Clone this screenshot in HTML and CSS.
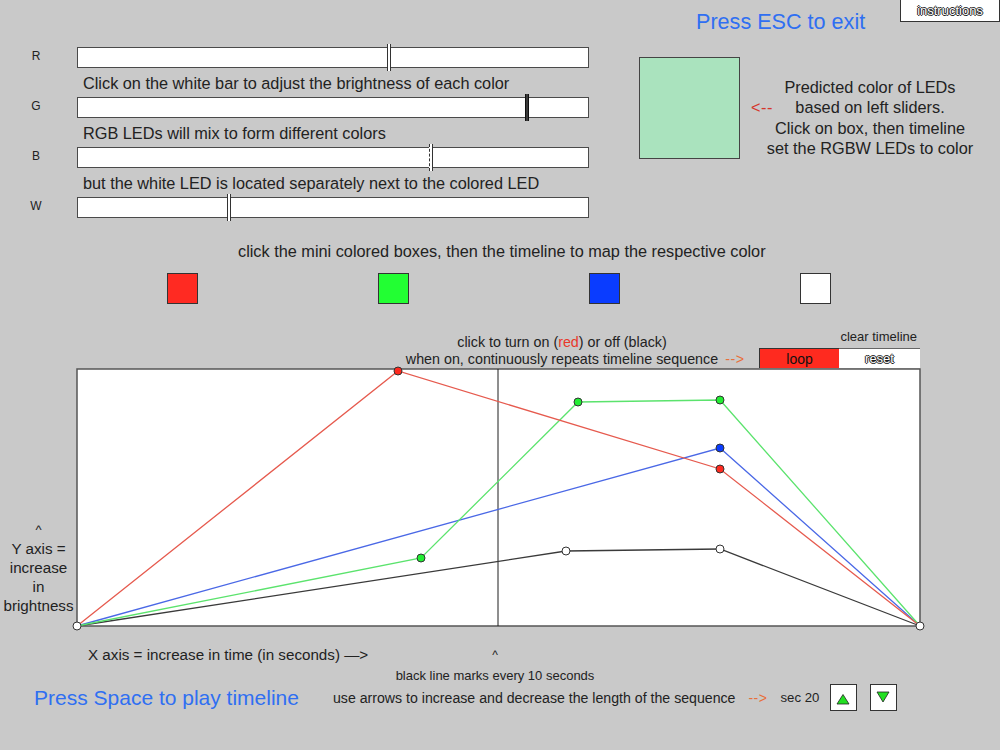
FILE: index.html
```html
<!DOCTYPE html>
<html>
<head>
<meta charset="utf-8">
<title>RGBW LED timeline</title>
<link rel="stylesheet" href="styles.css">
</head>
<body>
<div class="app">
  <header class="header">
    <div class="esc">Press ESC to exit</div>
    <button class="instructions outlined">instructions</button>
  </header>

  <section class="top">
    <div class="sliders">
      <div class="slider-row"><span class="label">R</span><div class="bar"><span class="handle" style="left:309px"></span></div></div>
      <p class="caption">Click on the white bar to adjust the brightness of each color</p>
      <div class="slider-row"><span class="label">G</span><div class="bar"><span class="handle dark" style="left:447px"></span></div></div>
      <p class="caption">RGB LEDs will mix to form different colors</p>
      <div class="slider-row"><span class="label">B</span><div class="bar"><span class="handle dashed" style="left:351px"></span></div></div>
      <p class="caption">but the white LED is located separately next to the colored LED</p>
      <div class="slider-row"><span class="label">W</span><div class="bar"><span class="handle" style="left:149px"></span></div></div>
    </div>
    <div class="preview">
      <div class="led-box"></div>
      <div class="predict">
        <span class="back-arrow">&lt;--</span>
        <span class="line">Predicted color of LEDs</span>
        <span class="line">based on left sliders.</span>
        <span class="line">Click on box, then timeline</span>
        <span class="line">set the RGBW LEDs to color</span>
      </div>
    </div>
  </section>

  <p class="map-hint">click the mini colored boxes, then the timeline to map the respective color</p>

  <div class="swatches">
    <span class="swatch red"></span>
    <span class="swatch green"></span>
    <span class="swatch blue"></span>
    <span class="swatch white"></span>
  </div>

  <div class="timeline-head">
    <div class="loop-help">
      <span class="line">click to turn on (<span class="red-word">red</span>) or off (black)</span>
      <span class="line">when on, continuously repeats timeline sequence<span class="orange-arrow">--&gt;</span></span>
    </div>
    <div class="controls">
      <div class="clear-label">clear timeline</div>
      <div class="btn-pair">
        <button class="loop">loop</button>
        <button class="reset outlined">reset</button>
      </div>
    </div>
  </div>

  <div class="chart-row">
    <div class="y-label">
      <span class="caret">^</span>
      <span>Y axis =</span>
      <span>increase</span>
      <span>in</span>
      <span>brightness</span>
    </div>
    <svg class="chart" width="845" height="259" viewBox="0 0 845 259">
      <rect x="1" y="1" width="843" height="257" fill="#ffffff" stroke="#555555" stroke-width="1.5"/>
      <line x1="422" y1="1" x2="422" y2="258" stroke="#1e1e1e" stroke-width="1"/>
      <polyline points="1,258 490,183 644,181 844,258" fill="none" stroke="#3a3a3a" stroke-width="1.3"/>
      <polyline points="1,258 644,80 844,258" fill="none" stroke="#4a68e6" stroke-width="1.3"/>
      <polyline points="1,258 345,190 502,34 644,32 844,258" fill="none" stroke="#5be36d" stroke-width="1.3"/>
      <polyline points="1,258 322,3 644,101 844,258" fill="none" stroke="#e65a4e" stroke-width="1.3"/>
      <g stroke="#333333" stroke-width="1">
        <circle cx="490" cy="183" r="4" fill="#ffffff"/>
        <circle cx="644" cy="181" r="4" fill="#ffffff"/>
        <circle cx="644" cy="80" r="4" fill="#0a3cff"/>
        <circle cx="345" cy="190" r="4" fill="#22ee33"/>
        <circle cx="502" cy="34" r="4" fill="#22ee33"/>
        <circle cx="644" cy="32" r="4" fill="#22ee33"/>
        <circle cx="322" cy="3" r="4" fill="#ff2a1f"/>
        <circle cx="644" cy="101" r="4" fill="#ff2a1f"/>
        <circle cx="1" cy="258" r="4" fill="#ffffff"/>
        <circle cx="844" cy="258" r="4" fill="#ffffff"/>
      </g>
    </svg>
  </div>

  <div class="x-row">
    <span class="x-label">X axis = increase in time (in seconds) —&gt;</span>
    <span class="x-caret">^</span>
  </div>
  <p class="tick-note">black line marks every 10 seconds</p>

  <div class="bottom-row">
    <span class="space">Press Space to play timeline</span>
    <span class="len-help">use arrows to increase and decrease the length of the sequence</span>
    <span class="orange-arrow2">--&gt;</span>
    <span class="sec">sec 20</span>
    <button class="step up">
      <svg width="27" height="27" viewBox="0 0 27 27"><polygon points="7,20 13,10.5 19,20" fill="#22e022" stroke="#222" stroke-width="0.8"/></svg>
    </button>
    <button class="step down">
      <svg width="27" height="27" viewBox="0 0 27 27"><polygon points="7,8 19,8 13,18" fill="#22e022" stroke="#222" stroke-width="0.8"/></svg>
    </button>
  </div>
</div>
</body>
</html>
```

FILE: styles.css
```css
* {
  box-sizing: border-box;
}

html, body {
  margin: 0;
  padding: 0;
  background: #c9c9c9;
}

body {
  font-family: "Liberation Sans", Arial, sans-serif;
  color: #222222;
}

.app {
  width: 1000px;
  height: 750px;
  overflow: hidden;
  display: flex;
  flex-direction: column;
}

button {
  font-family: inherit;
  padding: 0;
  margin: 0;
  cursor: pointer;
}

.outlined {
  color: #ffffff;
  text-shadow: -1px 0 #222, 1px 0 #222, 0 -1px #222, 0 1px #222;
}

/* header */
.header {
  height: 47px;
  display: flex;
  align-items: flex-start;
  padding-left: 696px;
}

.esc {
  font-size: 21.6px;
  line-height: 44px;
  color: #2f6ff2;
}

.instructions {
  margin-left: auto;
  width: 100px;
  height: 22px;
  background: #ffffff;
  border: 1px solid #333333;
  border-top: none;
  font-size: 13px;
  line-height: 20px;
}

/* sliders */
.top {
  display: flex;
  align-items: flex-start;
}

.sliders {
  width: 639px;
  display: flex;
  flex-direction: column;
}

.slider-row {
  display: flex;
  align-items: center;
  height: 21px;
}

.label {
  width: 72px;
  text-align: center;
  font-size: 12px;
  line-height: 14px;
  margin-bottom: 4px;
}

.bar {
  position: relative;
  margin-left: 5px;
  width: 512px;
  height: 21px;
  background: #ffffff;
  border: 1px solid #4a4a4a;
}

.handle {
  position: absolute;
  top: -4px;
  width: 4px;
  height: 27px;
  background: #ffffff;
  border-left: 1px solid #333333;
  border-right: 1px solid #333333;
}

.handle.dark {
  width: 4px;
  background: #3a3a3a;
  border-left: 1px solid #111111;
  border-right: 1px solid #111111;
}

.handle.dashed {
  border-left: 1px dashed #333333;
  border-right: 1px solid #333333;
}

.caption {
  margin: 0 0 0 83px;
  height: 29px;
  padding-top: 3px;
  font-size: 16.3px;
  line-height: 25px;
  white-space: nowrap;
}

/* preview */
.preview {
  display: flex;
  align-items: flex-start;
  margin-top: 10px;
}

.led-box {
  width: 101px;
  height: 102px;
  background: #aae3be;
  border: 1px solid #444444;
  flex: none;
}

.predict {
  position: relative;
  width: 260px;
  margin-top: 20px;
  display: flex;
  flex-direction: column;
  align-items: center;
  font-size: 16.3px;
  line-height: 20.3px;
}

.predict .line {
  white-space: nowrap;
}

.back-arrow {
  position: absolute;
  left: 11px;
  top: 20px;
  color: #d6352a;
  letter-spacing: 0.5px;
}

/* mini colour boxes */
.map-hint {
  margin: 23px 0 0 0;
  padding-left: 238px;
  font-size: 16.3px;
  line-height: 20px;
  white-space: nowrap;
}

.swatches {
  display: flex;
  gap: 180px;
  padding-left: 167px;
  margin-top: 12px;
}

.swatch {
  width: 31px;
  height: 31px;
  border: 1px solid #333333;
}

.swatch.red { background: #ff2a22; }
.swatch.green { background: #22ff33; }
.swatch.blue { background: #0a3cff; }
.swatch.white { background: #ffffff; }

/* timeline header */
.timeline-head {
  display: flex;
  align-items: flex-end;
  margin-top: 26px;
  padding-left: 404px;
}

.loop-help {
  width: 316px;
  display: flex;
  flex-direction: column;
  align-items: center;
  font-size: 14.3px;
  line-height: 17px;
}

.loop-help .line {
  white-space: nowrap;
}

.red-word {
  color: #e8382a;
}

.orange-arrow {
  display: inline-block;
  width: 30px;
  margin-right: -30px;
  padding-left: 7px;
  color: #e8703a;
  letter-spacing: 0.5px;
}

.controls {
  margin-left: 39px;
  width: 161px;
  display: flex;
  flex-direction: column;
}

.clear-label {
  height: 18px;
  font-size: 13px;
  line-height: 14px;
  text-align: right;
  padding-right: 3px;
}

.btn-pair {
  display: flex;
  height: 20px;
}

.loop {
  width: 80px;
  height: 20px;
  background: #ff2a1f;
  border: 1px solid #333333;
  border-right: none;
  border-bottom: none;
  font-size: 14px;
  color: #111111;
}

.reset {
  width: 81px;
  height: 20px;
  background: #ffffff;
  border: none;
  border-top: 1px solid #666666;
  font-size: 13px;
}

/* chart */
.chart-row {
  display: flex;
  height: 259px;
}

.y-label {
  width: 77px;
  display: flex;
  flex-direction: column;
  justify-content: flex-end;
  align-items: center;
  padding-bottom: 12px;
  font-size: 15.2px;
  line-height: 19px;
}

.caret {
  font-size: 13px;
}

.chart {
  display: block;
  overflow: visible;
  margin-left: -1px;
}

/* below chart */
.x-row {
  display: flex;
  align-items: center;
  margin-top: 19px;
  padding-left: 88px;
  height: 18px;
}

.x-label {
  font-size: 15.2px;
  line-height: 18px;
  white-space: nowrap;
}

.x-caret {
  margin-left: 124px;
  font-size: 12px;
}

.tick-note {
  margin: 4px 0 0 0;
  width: 990px;
  text-align: center;
  font-size: 13px;
  line-height: 16px;
}

.bottom-row {
  display: flex;
  align-items: center;
  height: 27px;
  padding-left: 34px;
}

.space {
  font-size: 21px;
  color: #2f6ff2;
  white-space: nowrap;
}

.len-help {
  margin-left: 34px;
  font-size: 14.15px;
  white-space: nowrap;
}

.orange-arrow2 {
  margin-left: 13px;
  font-size: 14px;
  color: #e8703a;
  letter-spacing: 0.5px;
}

.sec {
  margin-left: 13px;
  font-size: 13.2px;
}

.step {
  width: 27px;
  height: 27px;
  background: #ffffff;
  border: 1px solid #333333;
  display: block;
}

.step svg {
  display: block;
  margin: -1px;
}

.step.up {
  margin-left: 11px;
}

.step.down {
  margin-left: 13px;
}
```
